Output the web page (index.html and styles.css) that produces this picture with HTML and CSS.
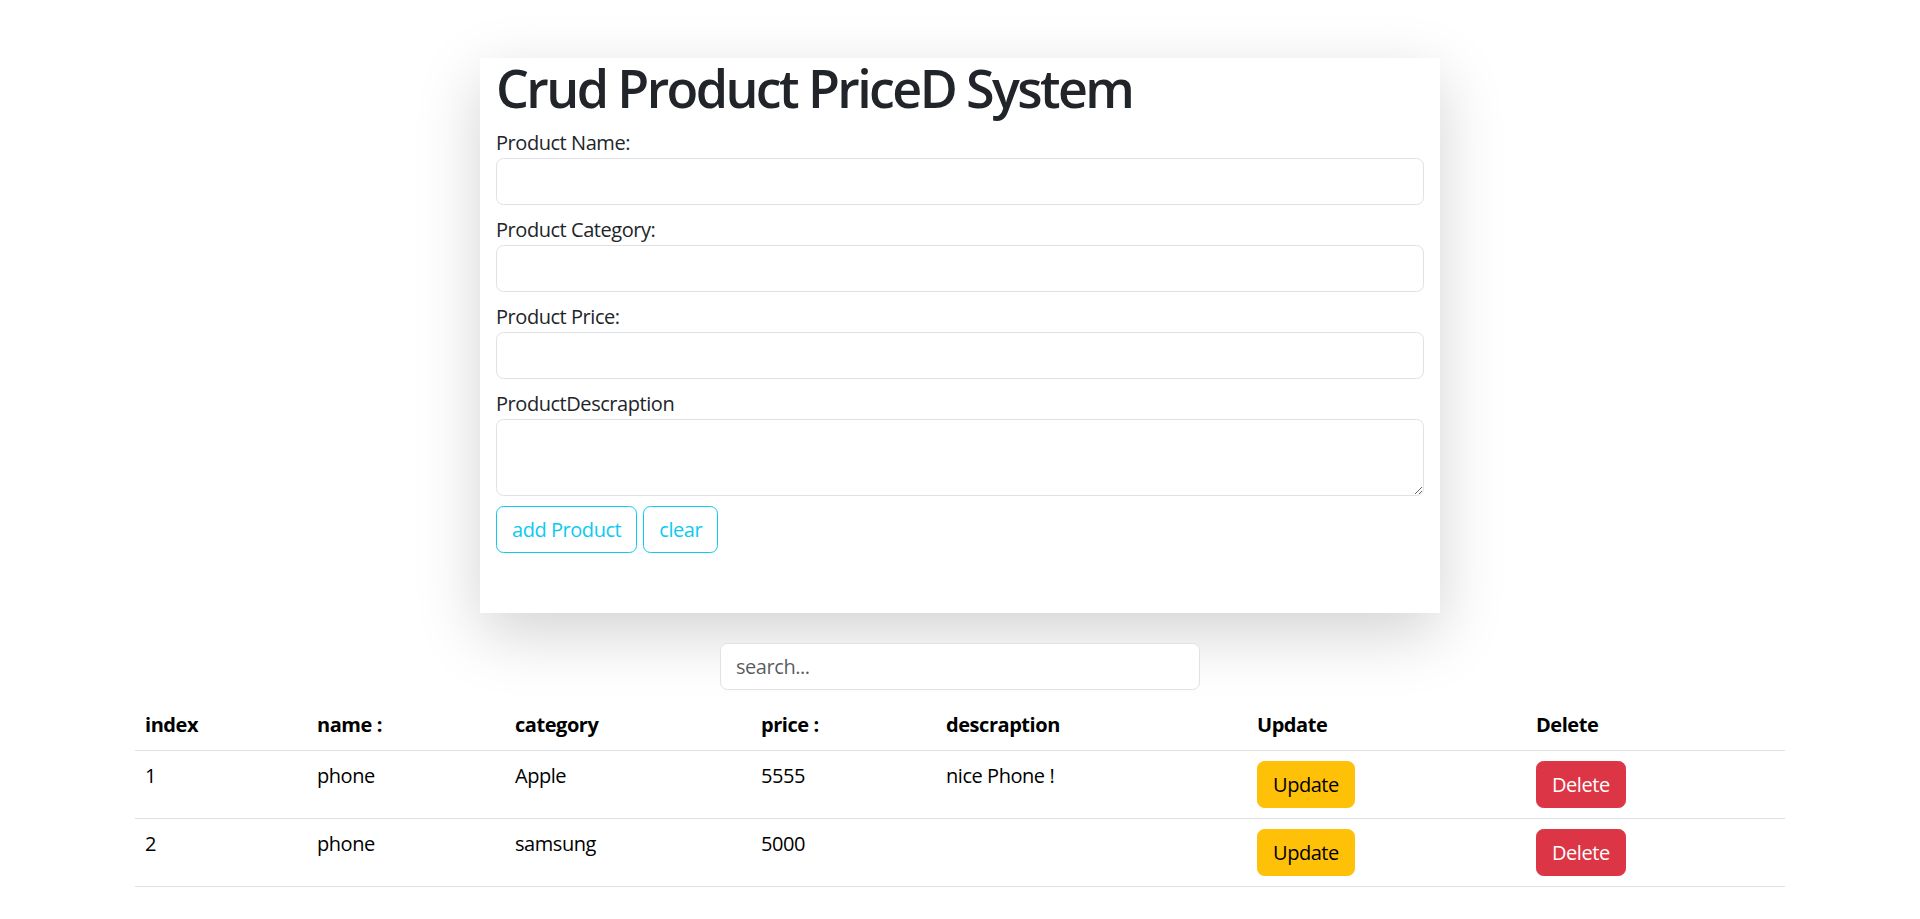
FILE: index.html
```html
<!DOCTYPE html>
<html lang="en">
<head>
<meta charset="utf-8">
<title>Crud Product PriceD System</title>
<link rel="stylesheet" href="styles.css">
</head>
<body>
<main class="page">
  <section class="card">
    <h1 class="title">Crud Product PriceD System</h1>
    <div class="field">
      <label class="label" for="pname">Product Name:</label>
      <input class="control" id="pname" type="text">
    </div>
    <div class="field">
      <label class="label" for="pcat">Product Category:</label>
      <input class="control" id="pcat" type="text">
    </div>
    <div class="field">
      <label class="label" for="pprice">Product Price:</label>
      <input class="control" id="pprice" type="text">
    </div>
    <div class="field">
      <label class="label" for="pdesc">ProductDescraption</label>
      <textarea class="control area" id="pdesc" rows="2"></textarea>
    </div>
    <div class="actions">
      <button class="btn btn-info-outline" type="button">add Product</button>
      <button class="btn btn-info-outline" type="button">clear</button>
    </div>
  </section>

  <input class="control search" type="text" placeholder="search...">

  <table class="table">
    <colgroup>
      <col class="c-index"><col class="c-name"><col class="c-cat"><col class="c-price"><col class="c-desc"><col class="c-upd"><col class="c-del">
    </colgroup>
    <thead>
      <tr><th>index</th><th>name :</th><th>category</th><th>price :</th><th>descraption</th><th>Update</th><th>Delete</th></tr>
    </thead>
    <tbody>
      <tr>
        <td>1</td><td>phone</td><td>Apple</td><td>5555</td><td>nice Phone !</td>
        <td><button class="btn btn-warning" type="button">Update</button></td>
        <td><button class="btn btn-danger" type="button">Delete</button></td>
      </tr>
      <tr>
        <td>2</td><td>phone</td><td>samsung</td><td>5000</td><td></td>
        <td><button class="btn btn-warning" type="button">Update</button></td>
        <td><button class="btn btn-danger" type="button">Delete</button></td>
      </tr>
    </tbody>
  </table>
</main>
</body>
</html>
```
FILE: styles.css
```css
* { box-sizing: border-box; }

html, body {
  margin: 0;
  padding: 0;
  background: #fff;
}

body {
  font-family: "Open Sans", "Noto Sans", "Liberation Sans", sans-serif;
  font-size: 20px;
  line-height: 30px;
  color: #212529;
  letter-spacing: -0.45px;
}

.page {
  padding-top: 58px;
}

.card {
  width: 960px;
  margin: 0 auto;
  background: #fff;
  padding: 0 16px 60px;
  box-shadow: 0 20px 60px rgba(0, 0, 0, 0.175);
}

.title {
  margin: 0 0 10px;
  font-size: 52px;
  line-height: 60px;
  font-weight: 600;
  letter-spacing: -2.6px;
  color: #212529;
}

.field {
  margin-bottom: 10px;
}

.label {
  display: block;
  line-height: 30px;
}

.control {
  display: block;
  width: 100%;
  height: 47px;
  padding: 7px 15px;
  font: inherit;
  letter-spacing: inherit;
  color: #212529;
  background: #fff;
  border: 1px solid #dee2e6;
  border-radius: 7.5px;
  outline: none;
}

.control::placeholder {
  color: rgba(33, 37, 41, 0.75);
}

.area {
  height: 77px;
  resize: vertical;
}

.actions {
  display: flex;
  gap: 6px;
}

.btn {
  display: inline-block;
  font: inherit;
  letter-spacing: inherit;
  line-height: 31px;
  height: 47px;
  padding: 7px 15px;
  border: 1px solid transparent;
  border-radius: 7.5px;
  background: transparent;
  cursor: pointer;
}

.btn-info-outline {
  color: #0dcaf0;
  border-color: #0dcaf0;
}

.btn-warning {
  background: #ffc107;
  border-color: #ffc107;
  color: #000;
}

.btn-danger {
  background: #dc3545;
  border-color: #dc3545;
  color: #fff;
}

.search {
  width: 480px;
  margin: 30px auto 0;
}

.table {
  width: 1650px;
  margin: 10px auto 0;
  border-collapse: collapse;
  table-layout: fixed;
  color: #000;
}

.c-index { width: 172px; }
.c-name { width: 198px; }
.c-cat { width: 246px; }
.c-price { width: 185px; }
.c-desc { width: 311px; }
.c-upd { width: 279px; }
.c-del { width: 259px; }

.table th,
.table td {
  padding: 10px;
  text-align: left;
  vertical-align: top;
  border-bottom: 1px solid #dee2e6;
}

.table th {
  font-weight: 700;
}
```
